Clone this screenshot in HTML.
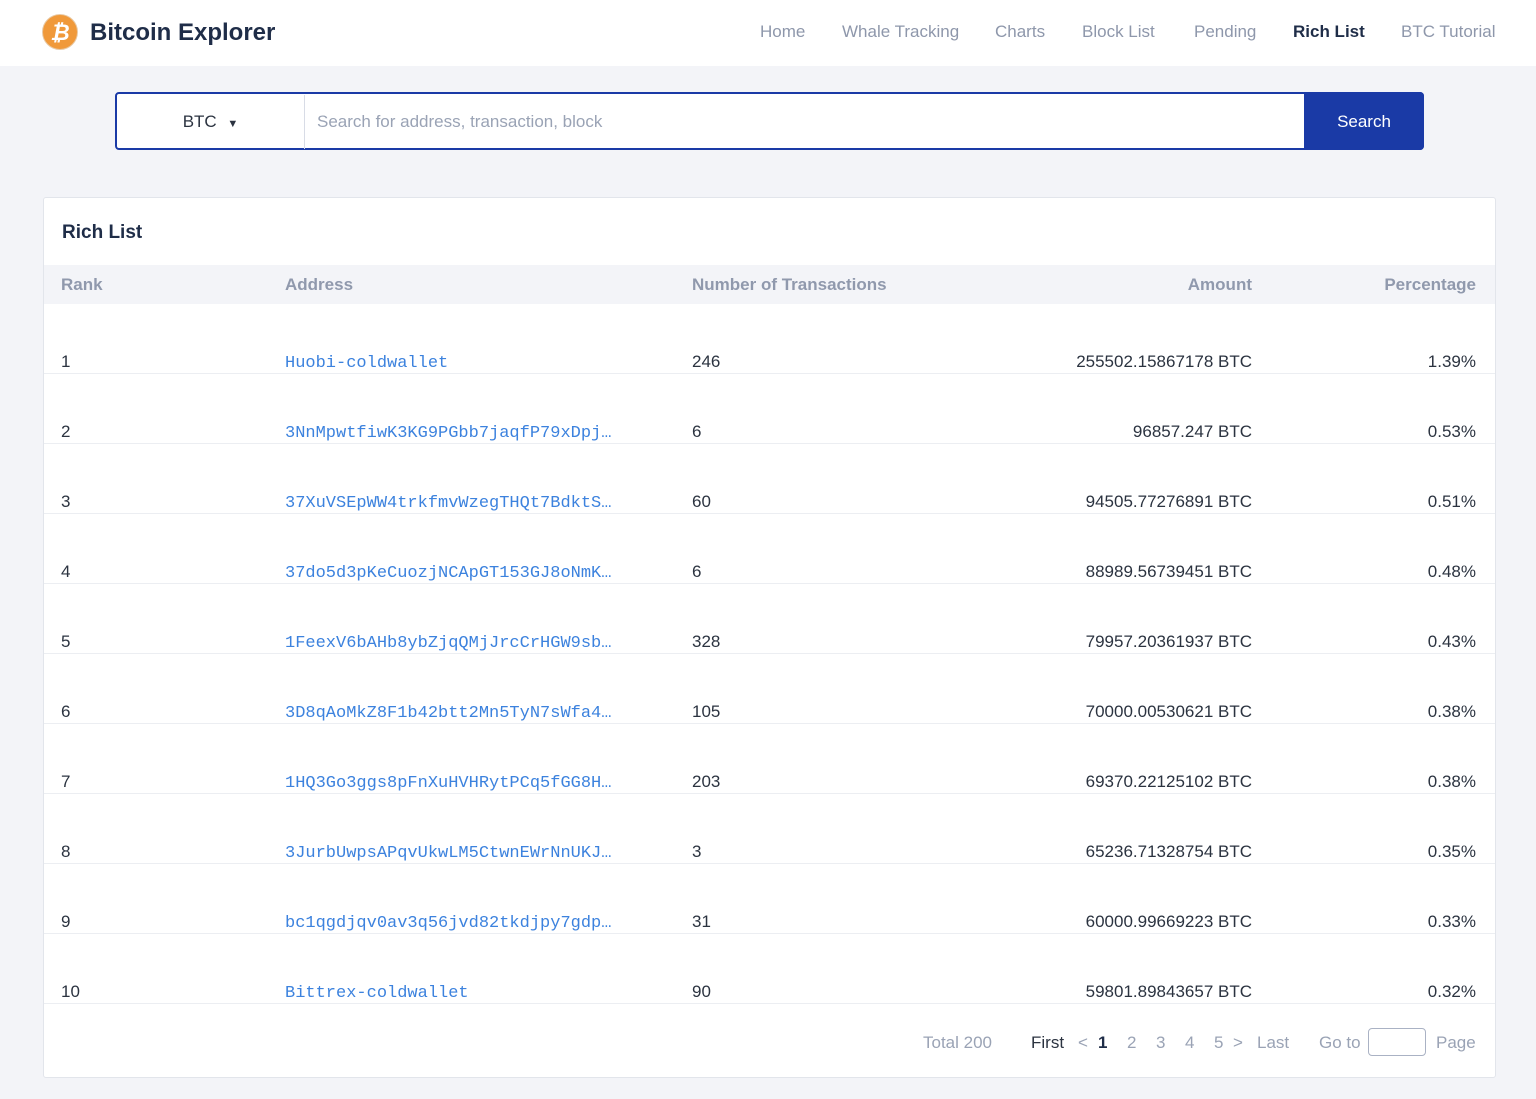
<!DOCTYPE html>
<html><head><meta charset="utf-8"><style>
*{margin:0;padding:0;box-sizing:border-box}
body{width:1536px;height:1099px;background:#f3f4f8;font-family:"Liberation Sans",sans-serif;position:relative;overflow:hidden;color:#2b3340}
.top{position:absolute;left:0;top:0;width:1536px;height:66px;background:#fff}
.logo{position:absolute;left:42px;top:14px;width:36px;height:36px;border-radius:50%;background:#f0993a;border:1px solid #e8c9a4;color:#fff;font-weight:bold;font-size:22px;text-align:center;line-height:35px;font-style:italic}
.brand{position:absolute;left:90px;top:19px;font-size:24px;font-weight:bold;color:#1f2d48}
.nav{position:absolute;top:22px;font-size:17px;color:#8e97ab}
.sbox{position:absolute;left:115px;top:92px;width:1309px;height:58px;border:2px solid #1a3aa6;border-radius:4px;background:#fff}
.sel{position:absolute;left:0;top:1px;width:188px;height:54px;border-right:1px solid #d8dce6;text-align:center;line-height:54px;font-size:17px;color:#2b3340}
.ph{position:absolute;left:200px;top:1px;line-height:54px;font-size:17px;color:#9aa3b5}
.btn{position:absolute;right:-2px;top:-2px;width:120px;height:58px;background:#1a3aa6;color:#fff;font-size:17px;text-align:center;line-height:60px;border-radius:0 4px 4px 0}
.card{position:absolute;left:43px;top:197px;width:1453px;height:881px;background:#fff;border:1px solid #e2e5eb;border-radius:3px}
.title{position:absolute;left:18px;top:24px;font-size:19px;font-weight:bold;color:#1f2d48}
.th{position:absolute;left:0;top:67px;width:1451px;height:39px;background:#f3f4f8;font-size:17px;font-weight:bold;color:#9099ad}
.c{position:absolute;white-space:nowrap}
.row{position:absolute;left:0;width:1451px;height:70px;border-bottom:1px solid #eceef2;font-size:17px;color:#2b3340}
.row .c{top:48px}
.row .c.addr{top:50px}
.addr{font-family:"Liberation Mono",monospace;color:#3c82de;font-size:17px}
.pg{position:absolute;top:835px;font-size:17px;color:#9aa3b5}
</style></head><body>
<div class="top">
<div class="logo">₿</div>
<div class="brand">Bitcoin Explorer</div>
<div class="nav" style="left:760px">Home</div>
<div class="nav" style="left:842px">Whale Tracking</div>
<div class="nav" style="left:995px">Charts</div>
<div class="nav" style="left:1082px">Block List</div>
<div class="nav" style="left:1194px">Pending</div>
<div class="nav" style="left:1293px;color:#1f2d48;font-weight:bold">Rich List</div>
<div class="nav" style="left:1401px">BTC Tutorial</div>
</div>
<div class="sbox"><div class="sel">BTC <span style="font-size:11px;margin-left:6px">▼</span></div><div class="ph">Search for address, transaction, block</div><div class="btn">Search</div></div>
<div class="card">
<div class="title">Rich List</div>
<div class="th">
<div class="c" style="left:17px;top:10px">Rank</div>
<div class="c" style="left:241px;top:10px">Address</div>
<div class="c" style="left:648px;top:10px">Number of Transactions</div>
<div class="c" style="right:243px;top:10px">Amount</div>
<div class="c" style="right:19px;top:10px">Percentage</div>
</div>
<div class="row" style="top:106px"><div class="c" style="left:17px">1</div><div class="c addr" style="left:241px">Huobi-coldwallet</div><div class="c" style="left:648px">246</div><div class="c" style="right:243px">255502.15867178 BTC</div><div class="c" style="right:19px">1.39%</div></div>
<div class="row" style="top:176px"><div class="c" style="left:17px">2</div><div class="c addr" style="left:241px">3NnMpwtfiwK3KG9PGbb7jaqfP79xDpj…</div><div class="c" style="left:648px">6</div><div class="c" style="right:243px">96857.247 BTC</div><div class="c" style="right:19px">0.53%</div></div>
<div class="row" style="top:246px"><div class="c" style="left:17px">3</div><div class="c addr" style="left:241px">37XuVSEpWW4trkfmvWzegTHQt7BdktS…</div><div class="c" style="left:648px">60</div><div class="c" style="right:243px">94505.77276891 BTC</div><div class="c" style="right:19px">0.51%</div></div>
<div class="row" style="top:316px"><div class="c" style="left:17px">4</div><div class="c addr" style="left:241px">37do5d3pKeCuozjNCApGT153GJ8oNmK…</div><div class="c" style="left:648px">6</div><div class="c" style="right:243px">88989.56739451 BTC</div><div class="c" style="right:19px">0.48%</div></div>
<div class="row" style="top:386px"><div class="c" style="left:17px">5</div><div class="c addr" style="left:241px">1FeexV6bAHb8ybZjqQMjJrcCrHGW9sb…</div><div class="c" style="left:648px">328</div><div class="c" style="right:243px">79957.20361937 BTC</div><div class="c" style="right:19px">0.43%</div></div>
<div class="row" style="top:456px"><div class="c" style="left:17px">6</div><div class="c addr" style="left:241px">3D8qAoMkZ8F1b42btt2Mn5TyN7sWfa4…</div><div class="c" style="left:648px">105</div><div class="c" style="right:243px">70000.00530621 BTC</div><div class="c" style="right:19px">0.38%</div></div>
<div class="row" style="top:526px"><div class="c" style="left:17px">7</div><div class="c addr" style="left:241px">1HQ3Go3ggs8pFnXuHVHRytPCq5fGG8H…</div><div class="c" style="left:648px">203</div><div class="c" style="right:243px">69370.22125102 BTC</div><div class="c" style="right:19px">0.38%</div></div>
<div class="row" style="top:596px"><div class="c" style="left:17px">8</div><div class="c addr" style="left:241px">3JurbUwpsAPqvUkwLM5CtwnEWrNnUKJ…</div><div class="c" style="left:648px">3</div><div class="c" style="right:243px">65236.71328754 BTC</div><div class="c" style="right:19px">0.35%</div></div>
<div class="row" style="top:666px"><div class="c" style="left:17px">9</div><div class="c addr" style="left:241px">bc1qgdjqv0av3q56jvd82tkdjpy7gdp…</div><div class="c" style="left:648px">31</div><div class="c" style="right:243px">60000.99669223 BTC</div><div class="c" style="right:19px">0.33%</div></div>
<div class="row" style="top:736px"><div class="c" style="left:17px">10</div><div class="c addr" style="left:241px">Bittrex-coldwallet</div><div class="c" style="left:648px">90</div><div class="c" style="right:243px">59801.89843657 BTC</div><div class="c" style="right:19px">0.32%</div></div>
<div class="pg" style="left:879px">Total 200</div>
<div class="pg" style="left:987px;color:#2b3340">First</div>
<div class="pg" style="left:1034px">&lt;</div>
<div class="pg" style="left:1054px;color:#1f2d48;font-weight:bold">1</div>
<div class="pg" style="left:1083px">2</div>
<div class="pg" style="left:1112px">3</div>
<div class="pg" style="left:1141px">4</div>
<div class="pg" style="left:1170px">5</div>
<div class="pg" style="left:1189px">&gt;</div>
<div class="pg" style="left:1213px">Last</div>
<div class="pg" style="left:1275px">Go to</div>
<div style="position:absolute;left:1324px;top:830px;width:58px;height:28px;border:1px solid #aab2c4;border-radius:4px"></div>
<div class="pg" style="left:1392px">Page</div>
</div>
</body></html>
